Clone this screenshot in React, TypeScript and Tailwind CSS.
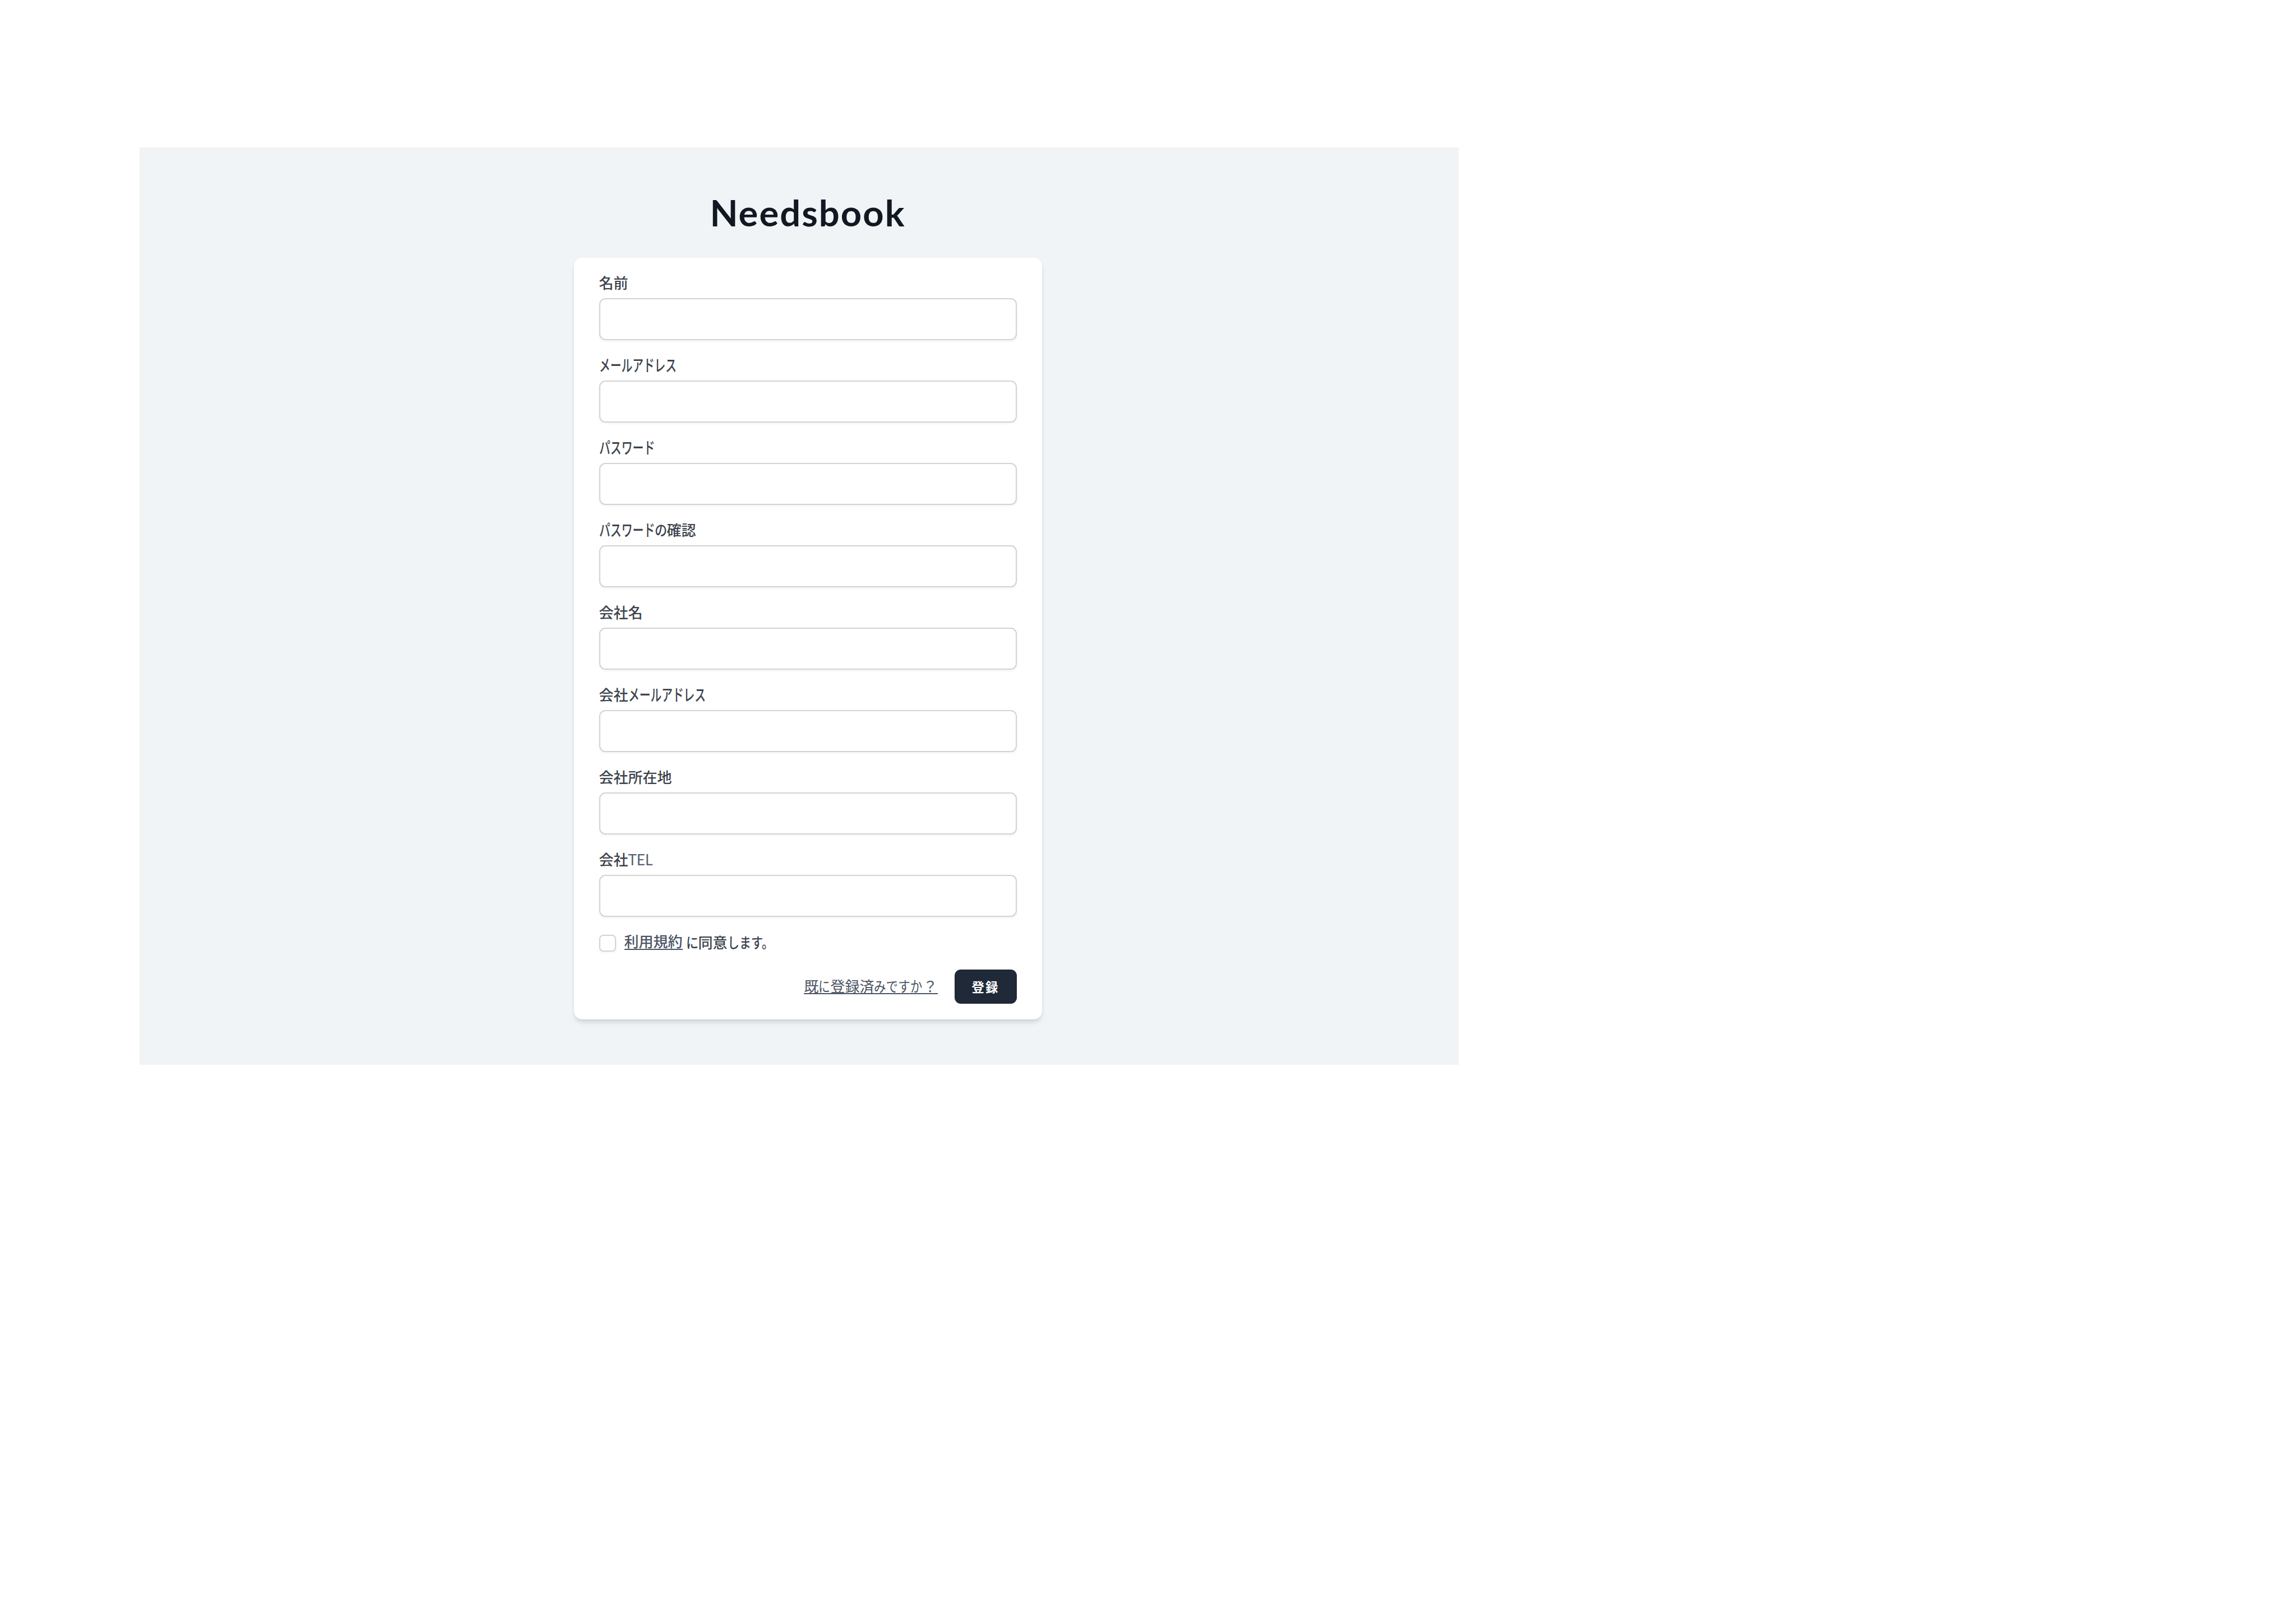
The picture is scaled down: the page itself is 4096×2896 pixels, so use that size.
import React from 'react';

type Part = {
  text: string;
  // kana are set narrower than kanji, so each run has its own width and squeeze
  kana?: string;
  squeeze?: string;
  latin?: boolean;
};

type Field = {
  id: string;
  type: string;
  label: Part[];
};

const FIELDS: Field[] = [
  { id: 'name', type: 'text', label: [{ text: '名前' }] },
  {
    id: 'email',
    type: 'email',
    label: [{ text: 'メールアドレス', kana: 'w-[137px]', squeeze: 'text-[29px] scale-x-[0.68]' }],
  },
  {
    id: 'password',
    type: 'password',
    label: [{ text: 'パスワード', kana: 'w-[99px]', squeeze: 'text-[29px] scale-x-[0.685]' }],
  },
  {
    id: 'password_confirmation',
    type: 'password',
    label: [
      { text: 'パスワード', kana: 'w-[99px]', squeeze: 'text-[29px] scale-x-[0.685]' },
      { text: 'の', kana: 'w-[22px]', squeeze: 'scale-x-[0.85]' },
      { text: '確認' },
    ],
  },
  { id: 'company_name', type: 'text', label: [{ text: '会社名' }] },
  {
    id: 'company_email',
    type: 'email',
    label: [
      { text: '会社' },
      { text: 'メールアドレス', kana: 'w-[137px]', squeeze: 'text-[29px] scale-x-[0.68]' },
    ],
  },
  { id: 'company_address', type: 'text', label: [{ text: '会社所在地' }] },
  { id: 'company_tel', type: 'tel', label: [{ text: '会社' }, { text: 'TEL', latin: true }] },
];

const LOGIN_LINK: Part[] = [
  { text: '既' },
  { text: 'に', kana: 'w-[21px]', squeeze: 'scale-x-[0.8]' },
  { text: '登録済' },
  { text: 'みですか', kana: 'w-[87px]', squeeze: 'scale-x-[0.83]' },
  { text: '？' },
];

function Text({ parts }: { parts: Part[] }) {
  return (
    <>
      {parts.map((part, i) => {
        if (part.kana) {
          return (
            <span key={i} className={`flex ${part.kana}`}>
              <span className={`inline-block origin-left ${part.squeeze}`}>{part.text}</span>
            </span>
          );
        }
        return (
          <span
            key={i}
            className={part.latin ? "pt-[4px] font-['Lato'] font-normal text-[#566070]" : undefined}
          >
            {part.text}
          </span>
        );
      })}
    </>
  );
}

export default function Register() {
  return (
    <div className="h-[2896px] w-[4096px] bg-white pl-[249px] pt-[263px] font-['Noto_Sans_CJK_JP',sans-serif]">
      <div className="flex h-[1637px] w-[2353px] flex-col items-center border-x-4 border-b-3 border-t-8 border-[#f3f3f3] bg-[#f0f4f7] pl-[31px]">
        <h1 className="mt-[68px] h-[121px] whitespace-nowrap font-['Lato',sans-serif] text-[65px] font-bold leading-[80px] tracking-[2.1px] text-[#111822]">
          Needsbook
        </h1>

        <form className="h-[1359px] w-[835px] rounded-[15px] bg-white px-[45px] pt-[25px] shadow-[0_7px_11px_-2px_rgba(0,0,0,0.1),0_4px_7px_-2px_rgba(0,0,0,0.08)]">
          <div className="flex flex-col gap-[24.94px]">
            {FIELDS.map((field) => (
              <div key={field.id}>
                <label
                  htmlFor={field.id}
                  className="flex h-[37px] items-center whitespace-nowrap text-[26px] font-medium leading-[37px] text-[#3d434d]"
                >
                  <Text parts={field.label} />
                </label>
                <input
                  id={field.id}
                  type={field.type}
                  className="mt-[10px] block h-[75px] w-full rounded-[11px] border-2 border-[#d2d3d5] bg-white px-[22px] text-[30px] shadow-[0_2px_4px_rgba(0,0,0,0.05)] outline-none"
                />
              </div>
            ))}
          </div>

          <div className="mt-[26px] flex h-[37px] items-center whitespace-nowrap text-[26px] font-medium leading-[37px] text-[#3d434d]">
            <input
              id="terms"
              type="checkbox"
              className="mt-[5px] size-[30px] appearance-none rounded-[7px] border-2 border-[#d2d3d5] bg-white shadow-[0_2px_4px_rgba(0,0,0,0.05)]"
            />
            <label htmlFor="terms" className="ml-[15px] flex items-center">
              <a className="h-[30px] border-b-2 border-[#4b5563] leading-[28px] text-[#4b5563]">
                利用規約
              </a>
              <span className="ml-[6px] flex">
                <Text
                  parts={[
                    { text: 'に', kana: 'w-[22px]', squeeze: 'scale-x-[0.85]' },
                    { text: '同意' },
                    { text: 'します。', kana: 'w-[82px]', squeeze: 'scale-x-[0.81]' },
                  ]}
                />
              </span>
            </label>
          </div>

          <div className="mt-[31px] flex items-center justify-end">
            <a className="flex h-[28px] whitespace-nowrap border-b-2 border-[#4b5563] text-[26px] leading-[25px] text-[#4b5563]">
              <Text parts={LOGIN_LINK} />
            </a>
            <button
              type="button"
              className="ml-[30px] flex h-[61px] w-[111px] items-center justify-center rounded-[11px] bg-[#1f2937] text-[22.4px] font-bold leading-[30px] tracking-[2.2px] text-white"
            >
              登録
            </button>
          </div>
        </form>
      </div>
    </div>
  );
}
